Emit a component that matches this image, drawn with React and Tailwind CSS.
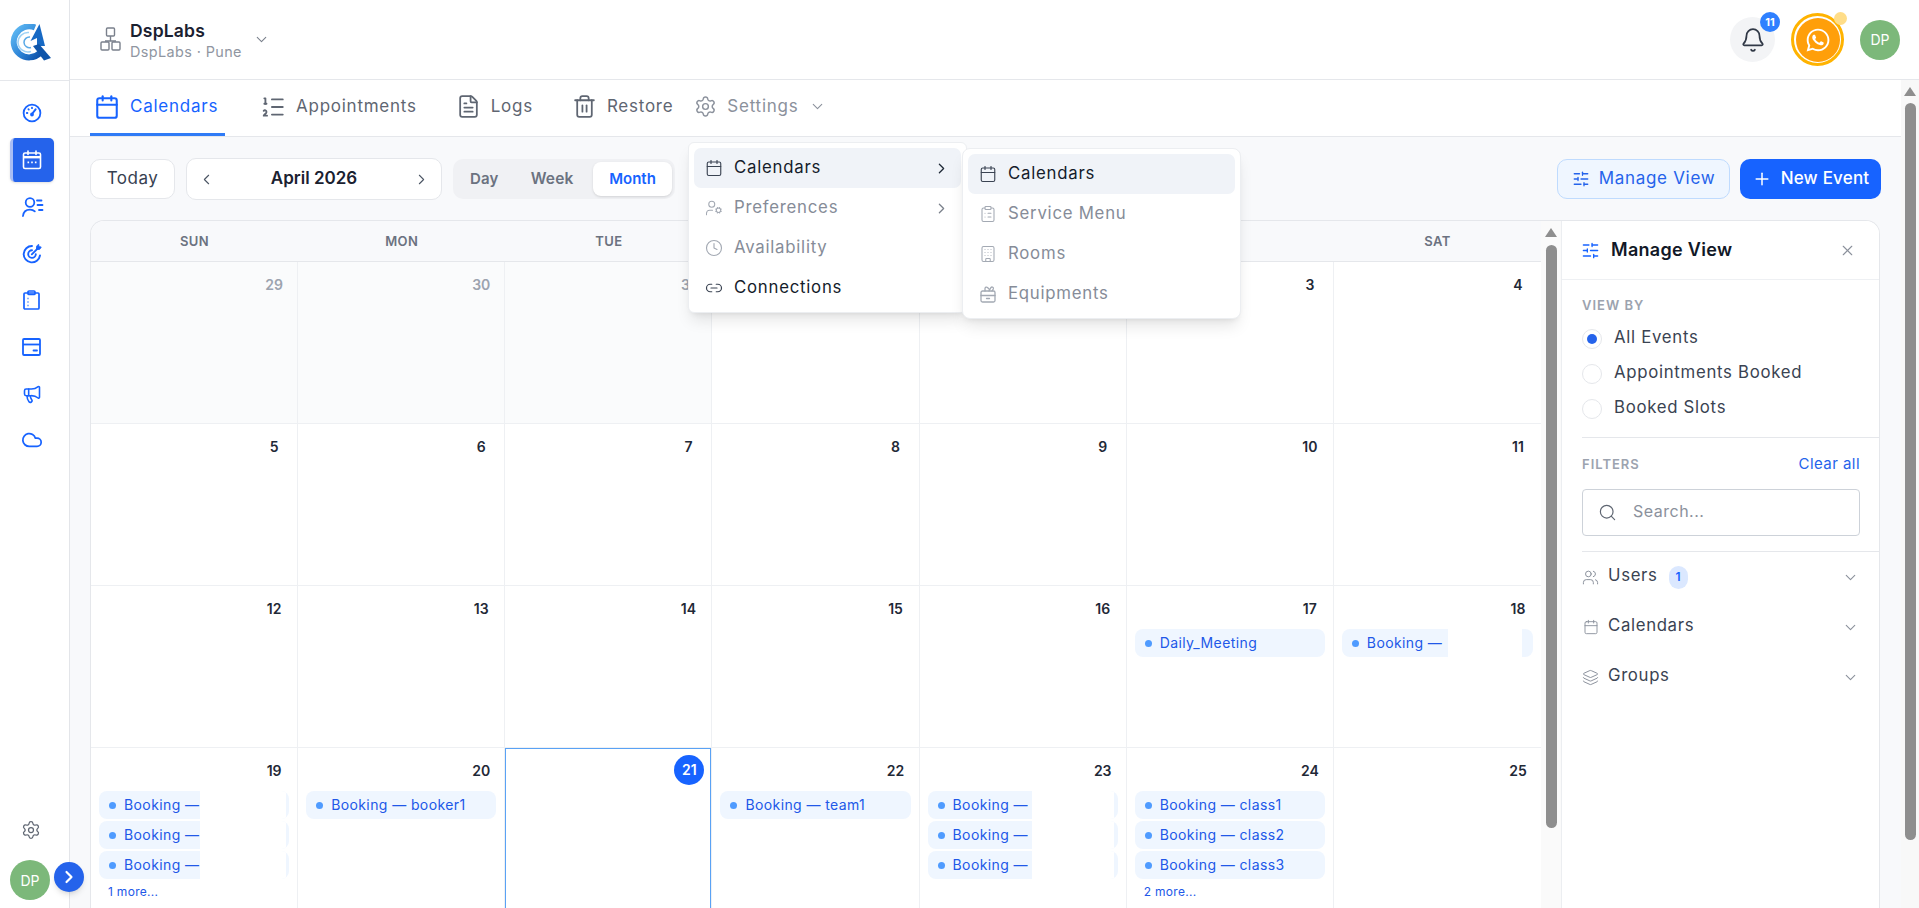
import React from "react";
import {
  Calendar, ListOrdered, FileText, Trash2, Settings, ChevronDown, ChevronRight, ChevronLeft,
  Megaphone, Cloud, UserCog, Clock, Link2, Building, SlidersHorizontal, Search, X, Users,
  Layers, Plus, Bell, ClipboardList,
} from "lucide-react";
import { FaWhatsapp } from "react-icons/fa";

function Logo() {
  return (
    <svg width="44" height="37" viewBox="0 0 44 37" fill="none">
      <defs>
        <linearGradient id="lg" x1="0" y1="0" x2="1" y2="1">
          <stop offset="0" stopColor="#62bdf5" />
          <stop offset="0.55" stopColor="#2f86d8" />
          <stop offset="1" stopColor="#0b4fa8" />
        </linearGradient>
      </defs>
      <path d="M27 3.500A15.500 15.500 0 1 0 32 29" stroke="url(#lg)" strokeWidth="6" />
      <path d="M21 8.500a10 10 0 0 0-11 10 10 10 0 0 0 13 9" stroke="#9fd2f5" strokeWidth="1.600" />
      <path d="M22 13a5.500 5.500 0 0 0-6 5.500 5.500 5.500 0 0 0 7 5" stroke="#5aa9e6" strokeWidth="1.500" />
      <path d="M31.500 0 L37 22 L29 22 L29 14 L22.500 17 Z" fill="#1769c4" />
      <path d="M25 22 L31 20 L43 34 L36 36.500 Z" fill="#0f55aa" />
    </svg>
  );
}

function OrgIcon() {
  return (
    <svg width="21" height="25" viewBox="0 0 21 25" fill="none" stroke="#7a808c" strokeWidth="1.4">
      <rect x="6.500" y="1" width="8" height="8" rx="1" />
      <path d="M10.500 9v5M5 14h11" />
      <rect x="1" y="15" width="8" height="8" rx="1" />
      <rect x="12" y="15" width="8" height="8" rx="1" />
    </svg>
  );
}

function GaugeIcon() {
  return (
    <svg width="20" height="20" viewBox="0 0 20 20" fill="none" stroke="#1763ff" strokeWidth="1.8" strokeLinecap="round">
      <circle cx="10" cy="10" r="8.400" />
      <path d="M10 11l3.600-4.600" strokeWidth="2" />
      <path d="M4.800 10h.6M6.400 6.200l.4.4M10 4.600v.6" />
      <circle cx="10" cy="11.500" r="1" fill="#1763ff" />
    </svg>
  );
}

function ActiveCal() {
  return (
    <svg width="20" height="20" viewBox="0 0 20 20" fill="none">
      <rect x="1.500" y="3" width="17" height="15.500" rx="1.500" stroke="#fff" strokeWidth="1.600" />
      <path d="M1.500 7.200h17" stroke="#fff" strokeWidth="2.400" />
      <path d="M6 1v3.500M14 1v3.500" stroke="#fff" strokeWidth="1.600" strokeLinecap="round" />
      <path d="M5.500 12.300h1.600M9.200 12.300h1.600M12.900 12.300h1.600" stroke="#fff" strokeWidth="1.800" />
    </svg>
  );
}

function UserLines() {
  return (
    <svg width="22" height="20" viewBox="0 0 22 20" fill="none" stroke="#1763ff" strokeWidth="1.8" strokeLinecap="round">
      <circle cx="8" cy="5.500" r="4.300" />
      <path d="M1 19c.4-4.200 3.200-6.400 7-6.400 2 0 3.600.6 4.800 1.800" />
      <path d="M15 3.500h4.500M15.500 8h5M17 13h3.500" />
    </svg>
  );
}

function TargetIcon() {
  return (
    <svg width="20" height="20" viewBox="0 0 20 20" fill="none" stroke="#1763ff" strokeWidth="1.900" strokeLinecap="round">
      <path d="M10 2a8.200 8.200 0 1 0 8 9.500" />
      <path d="M10 6.300a3.800 3.800 0 1 0 3.800 4" />
      <path d="M9.800 10.300l6-6" />
      <path d="M14.800 2.200l-.4 3.300 3.300-.2 1.500-2.300-2.300-.2-.2-2z" fill="#1763ff" strokeWidth="1" />
    </svg>
  );
}

function CardIcon() {
  return (
    <svg width="19" height="18" viewBox="0 0 19 18" fill="none" stroke="#1763ff" strokeWidth="1.800">
      <rect x="1" y="1" width="17" height="16" rx="1" />
      <path d="M1 6.500h17" />
      <path d="M11.500 12.500h3.500" strokeLinecap="round" />
    </svg>
  );
}

function NavClip() {
  return (
    <svg width="17" height="20" viewBox="0 0 17 20" fill="none" stroke="#1763ff" strokeWidth="1.700">
      <rect x="1" y="3" width="15" height="16" rx="1" />
      <rect x="5" y="1" width="7" height="3.500" rx="1" />
      <path d="M4.500 8.500h1M4.500 12h1M4.500 15.500h1" strokeWidth="1.500" />
    </svg>
  );
}

function EquipIcon() {
  return (
    <svg width="18" height="18" viewBox="0 0 18 18" fill="none" stroke="currentColor" strokeWidth="1.300" strokeLinecap="round">
      <rect x="2" y="6" width="14" height="11" rx="1.500" />
      <path d="M2 10.500h14M7.500 13.500h3" />
      <path d="M6 6V3.500A1.500 1.500 0 0 1 8.500 2.500L10 4M10 6l2-3.500a1.400 1.400 0 0 1 2.300 1.500L13 6" />
    </svg>
  );
}

function Tab({ icon, label, active, muted, className = "" }) {
  const color = active ? "text-[#1763ff]" : muted ? "text-[#8b919c]" : "text-[#5f6672]";
  return (
    <div className={`flex h-full items-center gap-[10px] ${active ? "" : "pb-[3px]"} ${color} ${className}`}>
      {icon}
      <span className="text-[17px] tracking-[0.75px]">{label}</span>
    </div>
  );
}

function Chip({ label, cover }) {
  return (
    <div className="relative flex h-[28px] items-center overflow-hidden rounded-[8px] bg-[#eff6ff] pl-[10px]">
      <span className="mr-[8px] h-[7px] w-[7px] shrink-0 rounded-full bg-[#4f9bff]" />
      <span className="whitespace-nowrap pb-[1px] text-[14px] tracking-[0.4px] text-[#2158e8]">{label}</span>
      {cover}
    </div>
  );
}

function Cell({ n, muted, today, events, more, last }) {
  return (
    <div className={`relative h-[162px] overflow-hidden border-b border-[#eef0f3] ${last ? "" : "border-r"} ${muted ? "bg-[#fafbfc]" : "bg-white"}`}>
      {today && <div className="absolute inset-0 border border-[#5aa2f5]" />}
      <div className={`flex h-[43px] items-center justify-end ${today ? "" : "pt-[2px]"}`}>
        {today ? (
          <span className="mr-[7px] flex h-[30px] w-[30px] items-center justify-center rounded-full bg-[#1763ff] text-[14px] font-semibold text-white">{n}</span>
        ) : (
          <span className={`mr-[11px] w-[24px] text-center text-[14px] font-semibold ${muted ? "text-[#9ca3af]" : "text-[#1f2937]"}`}>{n}</span>
        )}
      </div>
      {events && (
        <div className="flex flex-col gap-[2px] px-[8px]">
          {events}
          {more && <div className="pl-[9px] pt-[2px] text-[12px] tracking-[0.3px] text-[#2158e8]">{more}</div>}
        </div>
      )}
    </div>
  );
}

const coverA = <div className="absolute bottom-0 left-[101px] top-0 w-[86px] bg-white" />;
const coverB = <div className="absolute bottom-0 left-[104px] top-0 w-[82px] bg-white" />;
const coverC = <div className="absolute bottom-0 left-[106px] top-0 w-[74px] bg-white" />;

function Menu({ icon, label, active, muted, chevron, mutedChevron }) {
  return (
    <div className={`flex h-[40px] items-center rounded-[7px] px-[11px] ${active ? "bg-[#f0f3f8]" : ""}`}>
      <span className={`flex w-[18px] justify-center ${muted ? "text-[#a3a9b3]" : "text-[#3a4352]"}`}>{icon}</span>
      <span className={`ml-[11px] flex-1 text-[16.8px] tracking-[0.75px] ${muted ? "text-[#868c98]" : "text-[#151c2b]"}`}>{label}</span>
      {chevron && <ChevronRight size={17} strokeWidth={1.8} className={mutedChevron ? "text-[#7b818c]" : "text-[#1f2937]"} />}
    </div>
  );
}

function Radio({ label, on }) {
  return (
    <div className="flex h-[35px] items-center gap-[12px]">
      <span className="flex h-[20px] w-[20px] items-center justify-center rounded-full border border-[#e5e7eb] bg-white">
        {on && <span className="h-[10px] w-[10px] rounded-full bg-[#2563eb]" />}
      </span>
      <span className="pb-[1px] text-[16.8px] tracking-[0.7px] text-[#3a4352]">{label}</span>
    </div>
  );
}

function FilterRow({ icon, label, badge }) {
  return (
    <div className="flex h-[50px] items-center">
      <span className="flex w-[17px] justify-center text-[#8b919c]">{icon}</span>
      <span className="ml-[9px] pb-[3px] text-[16.8px] tracking-[0.65px] text-[#3a4352]">{label}</span>
      {badge && (
        <span className="ml-[11px] flex h-[23px] w-[19px] items-center justify-center rounded-full bg-[#dbe8ff] text-[12px] font-semibold text-[#1763ff]">{badge}</span>
      )}
      <ChevronDown size={17} strokeWidth={1.6} className="ml-auto mr-[-1px] text-[#8b919c]" />
    </div>
  );
}

function Arrow() {
  return <div className="h-0 w-0 border-x-[6px] border-b-[9px] border-x-transparent border-b-[#8e8e8e]" />;
}

export default function App() {
  return (
    <div className="relative flex h-[908px] w-[1919px] overflow-hidden bg-white font-[Inter,sans-serif]">
      {/* Sidebar */}
      <aside className="flex w-[70px] shrink-0 flex-col items-center border-r border-[#e3e5e9] bg-white">
        <div className="flex h-[81px] w-full items-start justify-center border-b border-[#e5e7eb] pr-[10px] pt-[24px]">
          <Logo />
        </div>
        <nav className="flex flex-col items-center pr-[6px] pt-[20px] text-[#1763ff]">
          <div className="flex h-[23px] items-center"><GaugeIcon /></div>
          <div className="mt-[14px] flex h-[44px] w-[44px] items-center justify-center rounded-[5px] border-l-[3px] border-[#a9bdf5] bg-[#2563eb] pr-[3px] shadow-sm"><ActiveCal /></div>
          <div className="mt-[13px] flex h-[23px] items-center pl-[2px]"><UserLines /></div>
          <div className="mt-[24px] flex h-[23px] items-center"><TargetIcon /></div>
          <div className="mt-[23px] flex h-[23px] items-center"><NavClip /></div>
          <div className="mt-[24px] flex h-[23px] items-center"><CardIcon /></div>
          <div className="mt-[24px] flex h-[23px] items-center"><Megaphone size={20} strokeWidth={1.9} /></div>
          <div className="mt-[23px] flex h-[23px] items-center"><Cloud size={22} strokeWidth={1.9} /></div>
        </nav>
        <div className="mt-auto flex w-full flex-col pb-[8px] pl-[10px]">
          <div className="mb-[20px] ml-[11px]"><Settings size={20} strokeWidth={1.5} className="text-[#5f6672]" /></div>
          <div className="flex h-[40px] w-[40px] items-center justify-center rounded-full bg-[#7cb87a] text-[14px] text-white">DP</div>
        </div>
      </aside>
      {/* Sidebar expander lies over the page edge */}
      <div className="absolute left-[54px] top-[862px] z-20 flex h-[30px] w-[30px] items-center justify-center rounded-full bg-[#2563eb] shadow-md">
        <ChevronRight size={20} strokeWidth={2.6} className="text-white" />
      </div>

      <div className="flex min-w-0 flex-1 flex-col">
        {/* Header */}
        <header className="flex h-[80px] shrink-0 items-center border-b border-[#e5e7eb] bg-white pl-[30px] pr-[19px]">
          <OrgIcon />
          <div className="ml-[9px] flex flex-col">
            <span className="text-[17.5px] font-semibold leading-[24px] tracking-[0.2px] text-[#1a2130]">DspLabs</span>
            <span className="text-[14.4px] leading-[18px] tracking-[0.4px] text-[#9096a1]">DspLabs · Pune</span>
          </div>
          <ChevronDown size={17} strokeWidth={1.5} className="ml-[11px] text-[#7a808c]" />
          <div className="ml-auto flex items-center">
            <div className="relative flex h-[45px] w-[45px] items-center justify-center rounded-full bg-[#f3f4f6]">
              <Bell size={26} strokeWidth={1.6} className="text-[#303846]" />
              <span className="absolute right-[-5px] top-[-5px] flex h-[20px] w-[20px] items-center justify-center rounded-full bg-[#2f80ff] text-[11px] font-bold text-white">11</span>
            </div>
            <div className="relative ml-[16px] flex h-[53px] w-[53px] items-center justify-center rounded-full border-[3px] border-[#ffb300] bg-white">
              <div className="flex h-[44px] w-[44px] items-center justify-center rounded-full bg-[#ff9f0a]">
                <FaWhatsapp size={26} className="text-white" />
              </div>
              <span className="absolute right-[-6px] top-[-4px] h-[13px] w-[13px] rounded-full bg-[#ffdd88]" />
            </div>
            <div className="ml-[16px] flex h-[40px] w-[40px] items-center justify-center rounded-full bg-[#7cb87a] text-[14px] text-white">DP</div>
          </div>
        </header>

        <div className="flex min-h-0 flex-1">
          <main className="flex min-w-0 flex-1 flex-col bg-[#f8f9fb]">
            {/* Tabs */}
            <div className="flex h-[57px] shrink-0 items-stretch border-b border-[#e5e7eb] bg-white pl-[20px]">
              <div className="w-[135px] border-b-[3px] border-[#2f7bf6] pl-[4px]">
                <Tab active label="Calendars" icon={<Calendar size={26} strokeWidth={1.9} />} />
              </div>
              <Tab className="ml-[35px]" label="Appointments" icon={<ListOrdered size={26} strokeWidth={1.7} />} />
              <Tab className="ml-[39px]" label="Logs" icon={<FileText size={25} strokeWidth={1.7} />} />
              <Tab className="ml-[39px]" label="Restore" icon={<Trash2 size={25} strokeWidth={1.7} />} />
              <Tab muted className="ml-[21px]" label="Settings" icon={<Settings size={23} strokeWidth={1.5} />} />
              <ChevronDown size={17} strokeWidth={1.5} className="ml-[11px] mb-[3px] self-center text-[#8b919c]" />
            </div>

            {/* Toolbar */}
            <div className="flex shrink-0 items-center pb-[20px] pl-[20px] pr-[20px] pt-[21px]">
              <button className="flex h-[40px] w-[85px] items-center justify-center rounded-[10px] border border-[#e5e7eb] bg-white text-[17px] tracking-[0.5px] text-[#374151]">Today</button>
              <div className="ml-[11px] flex h-[42px] w-[256px] items-center justify-between rounded-[10px] border border-[#e5e7eb] bg-white px-[11px]">
                <ChevronLeft size={17} strokeWidth={1.5} className="text-[#4b5563]" />
                <span className="pb-[1px] text-[17px] font-semibold text-[#1a2130]">April 2026</span>
                <ChevronRight size={17} strokeWidth={1.5} className="text-[#4b5563]" />
              </div>
              <div className="ml-[11px] flex h-[40px] w-[222px] items-center rounded-[10px] bg-[#f0f1f4] pl-[17px] pr-[3px]">
                <span className="text-[15px] font-semibold tracking-[0.2px] text-[#6b7280]">Day</span>
                <span className="ml-[32px] text-[15.5px] font-semibold tracking-[0.2px] text-[#6b7280]">Week</span>
                <span className="ml-auto flex h-[34px] w-[79px] items-center justify-center rounded-[8px] bg-white text-[15px] font-semibold text-[#1763ff] shadow">Month</span>
              </div>
              <button className="ml-auto flex h-[40px] w-[173px] items-center justify-center gap-[9px] rounded-[10px] border border-[#bfdbfe] bg-[#eff6ff] text-[17px] tracking-[0.7px] text-[#2563eb]">
                <SlidersHorizontal size={18} strokeWidth={1.7} />
                Manage View
              </button>
              <button className="ml-[10px] flex h-[40px] w-[141px] items-center justify-center gap-[9px] rounded-[10px] bg-[#1763ff] text-[17px] font-medium tracking-[0.2px] text-white">
                <Plus size={20} strokeWidth={1.8} />
                New Event
              </button>
            </div>

            {/* Calendar card */}
            <div className="ml-[20px] mr-[21px] flex min-h-0 flex-1 overflow-hidden rounded-t-[14px] border border-b-0 border-[#e5e7eb] bg-white">
              <div className="w-[1450px] shrink-0">
                <div className="grid h-[41px] grid-cols-7 items-center border-b border-[#e5e7eb] bg-[#f8f9fb] pt-[2px] text-center text-[13px] font-semibold tracking-[0.4px] text-[#6b7280]">
                  <span>SUN</span><span>MON</span><span>TUE</span><span>WED</span><span>THU</span><span>FRI</span><span>SAT</span>
                </div>
                <div className="grid grid-cols-7">
                  <Cell n="29" muted /><Cell n="30" muted /><Cell n="31" muted /><Cell n="1" /><Cell n="2" /><Cell n="3" /><Cell n="4" last />
                  <Cell n="5" /><Cell n="6" /><Cell n="7" /><Cell n="8" /><Cell n="9" /><Cell n="10" /><Cell n="11" last />
                  <Cell n="12" /><Cell n="13" /><Cell n="14" /><Cell n="15" /><Cell n="16" />
                  <Cell n="17" events={<Chip label="Daily_Meeting" />} />
                  <Cell n="18" last events={<Chip label="Booking —" cover={coverC} />} />
                  <Cell n="19" more="1 more..." events={<>
                    <Chip label="Booking —" cover={coverA} />
                    <Chip label="Booking —" cover={coverA} />
                    <Chip label="Booking —" cover={coverA} />
                  </>} />
                  <Cell n="20" events={<Chip label="Booking — booker1" />} />
                  <Cell n="21" today />
                  <Cell n="22" events={<Chip label="Booking — team1" />} />
                  <Cell n="23" events={<>
                    <Chip label="Booking —" cover={coverB} />
                    <Chip label="Booking —" cover={coverB} />
                    <Chip label="Booking —" cover={coverB} />
                  </>} />
                  <Cell n="24" more="2 more..." events={<>
                    <Chip label="Booking — class1" />
                    <Chip label="Booking — class2" />
                    <Chip label="Booking — class3" />
                  </>} />
                  <Cell n="25" last />
                </div>
              </div>

              {/* Inner scrollbar */}
              <div className="flex w-[20px] shrink-0 flex-col items-center bg-[#fafafa] pt-[7px]">
                <Arrow />
                <div className="mt-[8px] h-[583px] w-[11px] rounded-full bg-[#8e8e8e]" />
              </div>

              {/* Manage view panel */}
              <aside className="min-w-0 flex-1 border-l border-[#eceef1] bg-white">
                <div className="flex h-[59px] items-center border-b border-[#eef0f3] pl-[19px] pr-[23px]">
                  <SlidersHorizontal size={19} strokeWidth={1.7} className="text-[#1763ff]" />
                  <span className="ml-[11px] pb-[2px] text-[18px] font-semibold tracking-[0.3px] text-[#111827]">Manage View</span>
                  <X size={17} strokeWidth={1.6} className="ml-auto text-[#8b919c]" />
                </div>
                <div className="pl-[20px]">
                  <div className="pt-[15px] text-[13px] font-semibold leading-[20px] tracking-[1px] text-[#9ca3af]">VIEW BY</div>
                  <div className="mt-[6px] border-b border-[#e5e7eb] pb-[11px]">
                    <Radio on label="All Events" />
                    <Radio label="Appointments Booked" />
                    <Radio label="Booked Slots" />
                  </div>
                  <div className="flex items-center justify-between pr-[19px] pt-[16px] leading-[20px]">
                    <span className="text-[13px] font-semibold tracking-[1px] text-[#9ca3af]">FILTERS</span>
                    <span className="text-[15px] tracking-[0.45px] text-[#2563eb]">Clear all</span>
                  </div>
                  <div className="mr-[19px] mt-[15px] flex h-[47px] items-center rounded-[4px] border border-[#cdd2d9] pl-[15px]">
                    <Search size={19} strokeWidth={1.5} className="text-[#5f6672]" />
                    <span className="ml-[16px] pb-[3px] text-[16px] tracking-[0.5px] text-[#8b919c]">Search...</span>
                  </div>
                  <div className="mt-[15px] border-b border-[#e5e7eb]" />
                  <div className="pr-[21px]">
                    <FilterRow label="Users" badge="1" icon={<Users size={17} strokeWidth={1.4} />} />
                    <FilterRow label="Calendars" icon={<Calendar size={16} strokeWidth={1.4} />} />
                    <FilterRow label="Groups" icon={<Layers size={17} strokeWidth={1.4} />} />
                  </div>
                </div>
              </aside>
            </div>
          </main>

          {/* Page scrollbar */}
          <div className="flex w-[18px] shrink-0 flex-col items-center bg-[#f8f8f8] pt-[7px]">
            <Arrow />
            <div className="mt-[7px] h-[737px] w-[11px] rounded-full bg-[#8e8e8e]" />
          </div>
        </div>
      </div>

      {/* Settings menus overlay */}
      <div className="absolute left-[688px] top-[142px] z-10 h-[171px] w-[279px] rounded-[6px] border border-[#eceef1] bg-white p-[5px] shadow-lg">
        <Menu active chevron label="Calendars" icon={<Calendar size={18} strokeWidth={1.5} />} />
        <Menu muted chevron mutedChevron label="Preferences" icon={<UserCog size={18} strokeWidth={1.4} />} />
        <Menu muted label="Availability" icon={<Clock size={18} strokeWidth={1.5} />} />
        <Menu label="Connections" icon={<Link2 size={18} strokeWidth={1.6} />} />
      </div>
      <div className="absolute left-[962px] top-[148px] z-10 h-[171px] w-[279px] rounded-[8px] border border-[#eceef1] bg-white p-[5px] shadow-lg">
        <Menu active label="Calendars" icon={<Calendar size={18} strokeWidth={1.5} />} />
        <Menu muted label="Service Menu" icon={<ClipboardList size={18} strokeWidth={1.4} />} />
        <Menu muted label="Rooms" icon={<Building size={18} strokeWidth={1.4} />} />
        <Menu muted label="Equipments" icon={<EquipIcon />} />
      </div>
    </div>
  );
}
